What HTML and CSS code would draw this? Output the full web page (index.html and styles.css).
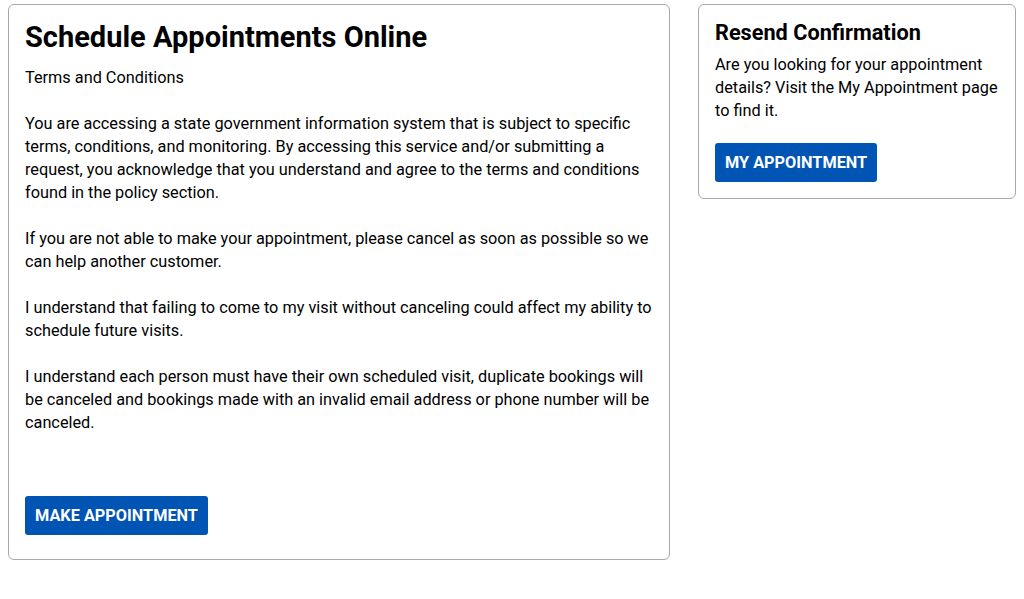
FILE: index.html
```html
<!DOCTYPE html>
<html lang="en">
<head>
<meta charset="utf-8">
<title>Schedule Appointments Online</title>
<link rel="stylesheet" href="styles.css">
</head>
<body>
<div class="layout">
  <section class="card card-main">
    <h1 class="title">Schedule Appointments Online</h1>
    <p class="text">Terms and Conditions</p>
    <p class="text">You are accessing a state government information system that is subject to specific terms, conditions, and monitoring. By accessing this service and/or submitting a request, you acknowledge that you understand and agree to the terms and conditions found in the policy section.</p>
    <p class="text">If you are not able to make your appointment, please cancel as soon as possible so we can help another customer.</p>
    <p class="text">I understand that failing to come to my visit without canceling could affect my ability to schedule future visits.</p>
    <p class="text">I understand each person must have their own scheduled visit, duplicate bookings will be canceled and bookings made with an invalid email address or phone number will be canceled.</p>
    <div class="actions">
      <button class="btn" type="button">MAKE APPOINTMENT</button>
    </div>
  </section>
  <section class="card card-side">
    <h2 class="subtitle">Resend Confirmation</h2>
    <p class="text side-text">Are you looking for your appointment details? Visit the My Appointment page to find it.</p>
    <button class="btn" type="button">MY APPOINTMENT</button>
  </section>
</div>
</body>
</html>
```
FILE: styles.css
```css
html, body {
  margin: 0;
  padding: 0;
  background: #fff;
}
body {
  padding: 4px 8px;
  font-family: Roboto, "Liberation Sans", sans-serif;
  color: #000;
  font-size: 16.3px;
  line-height: 23px;
}
.layout {
  display: grid;
  grid-template-columns: 662px 318px;
  column-gap: 28px;
  align-items: start;
}
.card {
  border: 1px solid #a9a9a9;
  border-radius: 6px;
  padding: 16px;
  box-sizing: border-box;
}
.card-main {
  height: 556px;
  display: flex;
  flex-direction: column;
}
.title {
  font-size: 29px;
  font-weight: 700;
  line-height: 34px;
  margin: -1px 0 12px 0;
}
.subtitle {
  font-size: 21.7px;
  font-weight: 700;
  line-height: 26px;
  margin: -1px 0 7px 0;
}
.text {
  margin: 0 0 23px 0;
}
.side-text {
  margin-bottom: 21px;
}
.actions {
  margin-top: auto;
  padding-bottom: 8px;
}
.btn {
  background: #0054b4;
  color: #fff;
  border: none;
  border-radius: 3px;
  font-family: Roboto, "Liberation Sans", sans-serif;
  font-weight: 700;
  font-size: 16.3px;
  line-height: 20px;
  height: 39px;
  padding: 0 10px;
  cursor: pointer;
  display: inline-block;
}
```
